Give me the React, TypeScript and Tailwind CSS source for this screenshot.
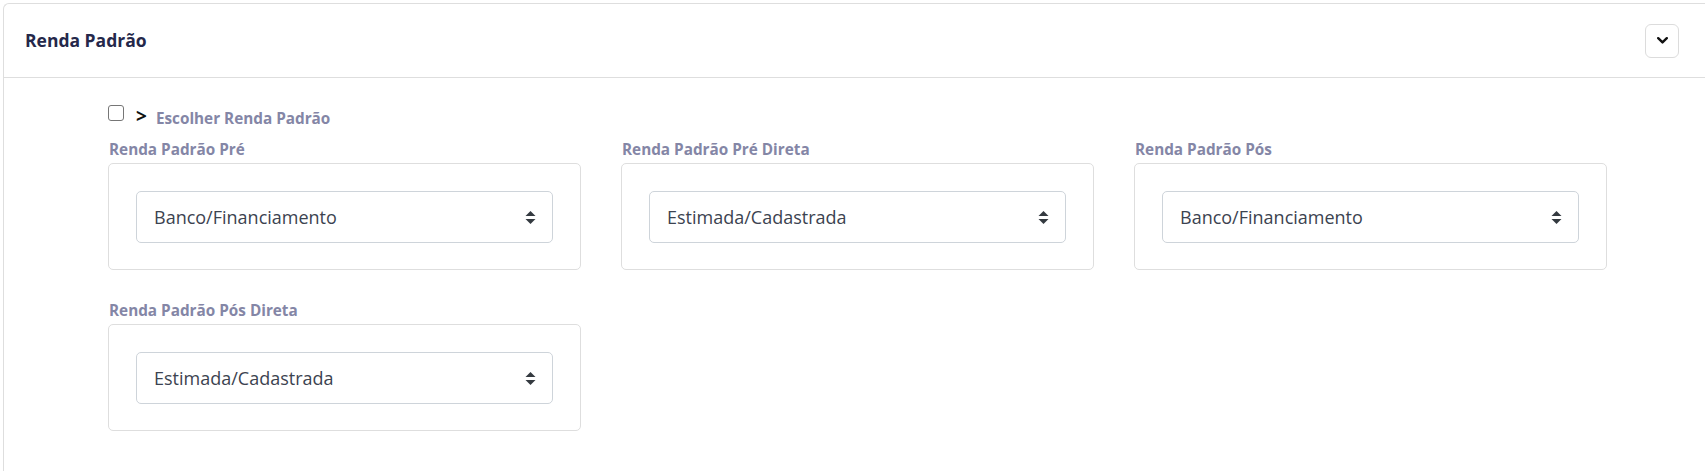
import React from "react";

const FONT = { fontFamily: '"Open Sans", "Noto Sans", sans-serif' };

function SortIcon() {
  return (
    <svg width="11" height="13" viewBox="0 0 11 13" fill="#343a40">
      <path d="M0.5 5 L5.5 0 L10.5 5 Z" />
      <path d="M0.5 8 L5.5 13 L10.5 8 Z" />
    </svg>
  );
}

function ChevronDown() {
  return (
    <svg width="11" height="7" viewBox="0 0 11 7" fill="none">
      <path d="M1.2 1.2 L5.5 5.4 L9.8 1.2" stroke="#111" strokeWidth="2.4" strokeLinecap="round" strokeLinejoin="round" />
    </svg>
  );
}

function Campo({ label, value }: { label: string; value: string }) {
  return (
    <div className="w-[473px]">
      <div className="mb-[4px] pl-[1px] text-[15.3px] font-bold leading-[19px] text-[#8486a6]">{label}</div>
      <div className="h-[107px] rounded-[5px] border border-[#dedede] px-[27px] pt-[27px]">
        <div className="flex h-[52px] items-center justify-between rounded-[5px] border border-[#ced4da] bg-white pl-[17px] pr-[16px]">
          <span className="text-[18px] text-[#3c4350]">{value}</span>
          <SortIcon />
        </div>
      </div>
    </div>
  );
}

export default function App() {
  return (
    <div className="h-[471px] w-[1705px] overflow-hidden bg-white pl-[3px] pt-[3px]" style={FONT}>
      <div className="h-[480px] rounded-tl-[6px] border-l border-t border-[#dedede]">
        {/* cabeçalho */}
        <div className="flex h-[74px] items-center justify-between border-b border-[#dedede] pl-[21px] pr-[26px]">
          <h2 className="text-[17.5px] font-bold text-[#25284a]">Renda Padrão</h2>
          <button className="flex h-[34px] w-[34px] items-center justify-center rounded-[6px] border border-[#dcdcdc] bg-white">
            <ChevronDown />
          </button>
        </div>

        {/* corpo */}
        <div className="pl-[104px] pt-[27px]">
          <div className="flex items-start">
            <span className="h-[16px] w-[16px] rounded-[3px] border border-[#767676] bg-white" />
            <span className="ml-[12px] mt-[1px] text-[19px] font-bold leading-[20px] text-[#111]">&gt;</span>
            <span className="ml-[9px] mt-[3px] text-[15.3px] font-bold leading-[20px] text-[#8486a6]">Escolher Renda Padrão</span>
          </div>

          <div className="mt-[12px] flex gap-[40px]">
            <Campo label="Renda Padrão Pré" value="Banco/Financiamento" />
            <Campo label="Renda Padrão Pré Direta" value="Estimada/Cadastrada" />
            <Campo label="Renda Padrão Pós" value="Banco/Financiamento" />
          </div>

          <div className="mt-[31px] flex gap-[40px]">
            <Campo label="Renda Padrão Pós Direta" value="Estimada/Cadastrada" />
          </div>
        </div>
      </div>
    </div>
  );
}
